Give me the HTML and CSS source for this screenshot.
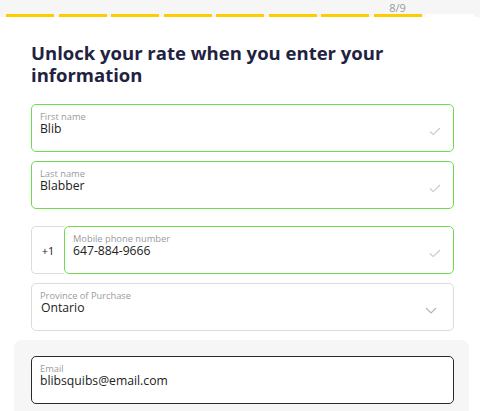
FILE: index.html
```html
<!DOCTYPE html>
<html>
<head>
<meta charset="utf-8">
<link rel="stylesheet" href="styles.css">
</head>
<body>
<div class="topbar">
  <div class="steps">
    <div class="seg done"></div>
    <div class="seg done"></div>
    <div class="seg done"></div>
    <div class="seg done"></div>
    <div class="seg done"></div>
    <div class="seg done"></div>
    <div class="seg done"></div>
    <div class="seg done current"><span class="count">8/9</span></div>
    <div class="seg"></div>
  </div>
</div>
<main class="content">
  <h1 class="title">Unlock your rate when you enter your information</h1>
  <div class="field valid">
    <div class="text">
      <div class="label">First name</div>
      <div class="value">Blib</div>
    </div>
    <svg class="icon" width="12" height="9" viewBox="0 0 12 9"><path d="M1 4.5 L4.2 7.6 L11 1" fill="none" stroke="#c8c8c8" stroke-width="1.1"/></svg>
  </div>
  <div class="field valid">
    <div class="text">
      <div class="label">Last name</div>
      <div class="value">Blabber</div>
    </div>
    <svg class="icon" width="12" height="9" viewBox="0 0 12 9"><path d="M1 4.5 L4.2 7.6 L11 1" fill="none" stroke="#c8c8c8" stroke-width="1.1"/></svg>
  </div>
  <div class="phone-row">
    <div class="prefix">+1</div>
    <div class="field valid phone">
      <div class="text">
        <div class="label">Mobile phone number</div>
        <div class="value">647-884-9666</div>
      </div>
      <svg class="icon" width="12" height="9" viewBox="0 0 12 9"><path d="M1 4.5 L4.2 7.6 L11 1" fill="none" stroke="#c8c8c8" stroke-width="1.1"/></svg>
    </div>
  </div>
  <div class="field plain">
    <div class="text">
      <div class="label">Province of Purchase</div>
      <div class="value indent">Ontario</div>
    </div>
    <svg class="icon chevron" width="12" height="7" viewBox="0 0 12 7"><path d="M1 1 L6 6 L11 1" fill="none" stroke="#b5b5b5" stroke-width="1.2"/></svg>
  </div>
  <section class="panel">
    <div class="field dark">
      <div class="text">
        <div class="label">Email</div>
        <div class="value">blibsquibs@email.com</div>
      </div>
    </div>
  </section>
</main>
</body>
</html>
```
FILE: styles.css
```css
* { box-sizing: border-box; }
html, body { margin: 0; padding: 0; background: #ffffff; }
body {
  font-family: "Open Sans", "Liberation Sans", sans-serif;
  color: #222;
  overflow: hidden;
}
.topbar {
  background: #f6f6f6;
  height: 16.5px;
  padding: 0 6px;
}
.steps {
  display: flex;
  gap: 4.5px;
  height: 16.5px;
  align-items: flex-end;
}
.seg {
  flex: 1;
  height: 3px;
  background: #ffffff;
  position: relative;
}
.seg.done { background: #ffcc00; }
.count {
  position: absolute;
  left: 0;
  right: 0;
  bottom: 4px;
  text-align: center;
  font-size: 11px;
  line-height: 11px;
  color: #9a9a9a;
}
.content {
  padding: 0 26px 0 31px;
}
.title {
  margin: 25.5px 0 18px;
  font-size: 18.5px;
  line-height: 22px;
  font-weight: 700;
  color: #1f2240;
}
.field {
  height: 48px;
  border: 1px solid #dcdcdc;
  border-radius: 5px;
  display: flex;
  align-items: flex-start;
  padding: 6.5px 12px 0 8px;
  margin-bottom: 9px;
  background: #fff;
}
.field.valid { border: 1.5px solid #6fdc4f; }
.field.dark { border: 1px solid #2a2a2a; padding-top: 7px; }
.field.plain { padding-top: 7px; }
.text { flex: 1; }
.label {
  font-size: 9.3px;
  line-height: 9px;
  color: #9b9b9b;
}
.value {
  margin-top: 2px;
  font-size: 12.2px;
  line-height: 12px;
  color: #222;
}
.value.indent { padding-left: 1px; }
.icon { margin-top: 15px; }
.chevron { margin-top: 15.5px; margin-right: 4px; }
.phone-row {
  display: flex;
  margin-top: 17px;
}
.prefix {
  width: 33px;
  height: 48px;
  border: 1px solid #dcdcdc;
  border-right: none;
  border-radius: 5px 0 0 5px;
  display: flex;
  align-items: center;
  justify-content: center;
  font-size: 11px;
  color: #222;
}
.field.phone { flex: 1; }
.panel {
  background: #f6f6f6;
  margin: 0 -15px 0 -17px;
  padding: 16px 15px 16px 17px;
  border-radius: 8px 8px 0 0;
}
```
